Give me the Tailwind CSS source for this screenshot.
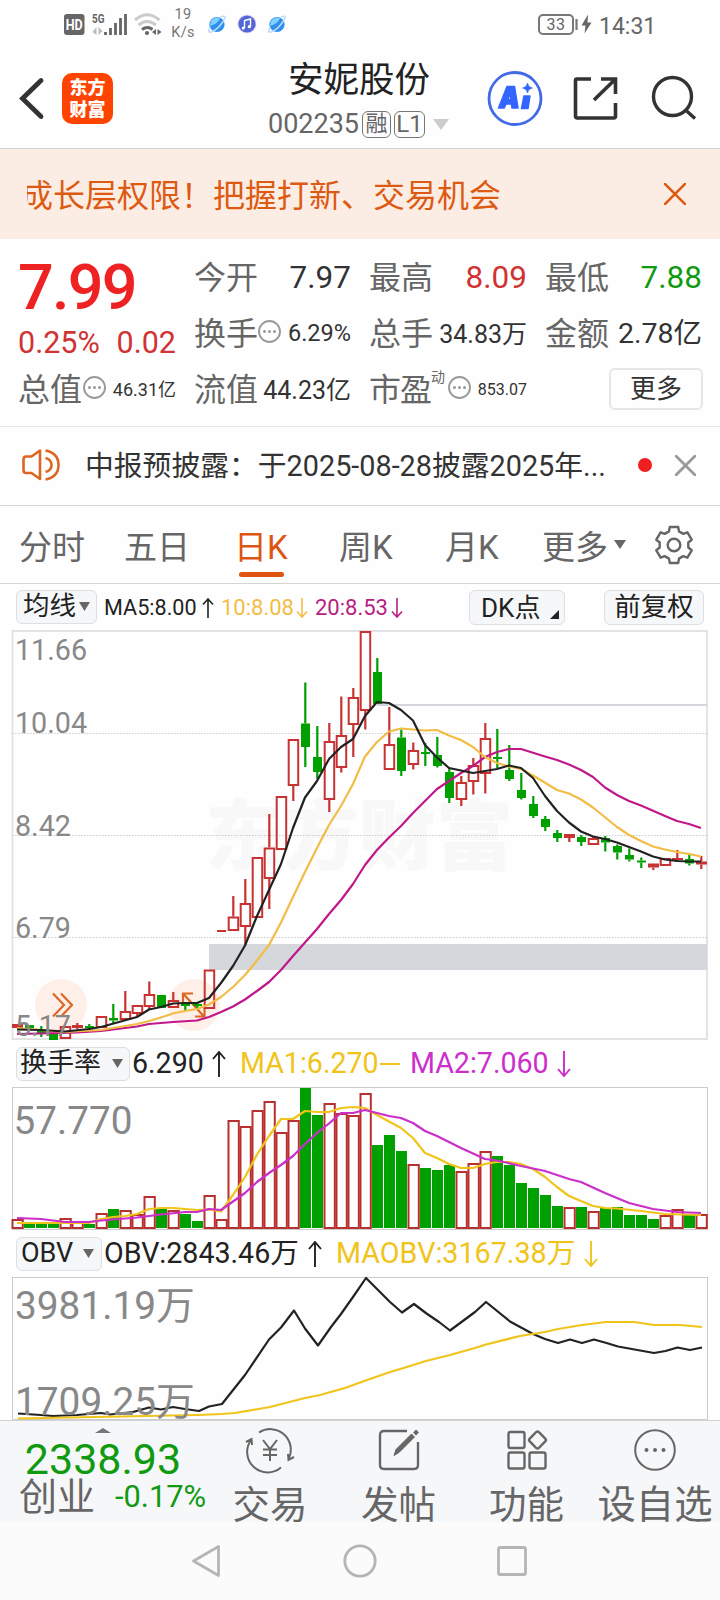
<!DOCTYPE html>
<html lang="zh-CN">
<head>
<meta charset="utf-8">
<title>安妮股份 002235</title>
<script src="https://cdn.jsdelivr.net/npm/@tailwindcss/browser@4"></script>
</head>
<body class="bg-white">
<div class="w-[720px] h-[1600px] overflow-hidden bg-[#fefefe] flex flex-col font-[Roboto,'Noto_Sans_CJK_SC',sans-serif] leading-none whitespace-nowrap text-[#333]">

  <!-- status bar -->
  <div class="h-12 shrink-0 flex items-center pl-16 text-[#666]">
    <svg class="w-[21px] h-[21px]" viewBox="0 0 21 21"><rect width="20.500" height="21" rx="3" fill="#666"/><text x="10.200" y="15.500" text-anchor="middle" font-size="14" font-weight="700" fill="#fff" textLength="17" lengthAdjust="spacingAndGlyphs">HD</text></svg>
    <svg class="w-[36px] h-[24px] ml-[7px]" viewBox="92 12 36 24"><text x="92" y="22.500" font-size="13" font-weight="700" fill="#666" textLength="12.500" lengthAdjust="spacingAndGlyphs">5G</text><path d="M96.500 27v8l-4-3zM98.500 35v-8l4 4z" fill="#bbb"/><path d="M105.500 32v3M110.500 28v7M115.500 23v12M120.500 18v17M125.500 14v21" stroke="#666" stroke-width="2.800"/></svg>
    <svg class="w-[28px] h-[24px] ml-[6px]" viewBox="134 12 28 24" fill="none" stroke-width="3"><path d="M135 20q12-10.500 24.500 0" stroke="#ccc"/><path d="M138.500 25q8.500-7 17.500 0" stroke="#ccc"/><path d="M142 29.500q5.500-4 10.500 0" stroke="#666"/><circle cx="147" cy="33" r="2.100" fill="#666"/><path d="M156 29v6l-4-3zM157.500 35v-6l4 3z" fill="#666"/></svg>
    <div class="w-[42px] flex flex-col items-center gap-[4px] text-[14.500px] text-[#777] tracking-[0.3px]"><span>19</span><span>K/s</span></div>
    <svg class="w-[18px] h-[19px] ml-[4px]" viewBox="0 0 18 19"><circle cx="9" cy="9.500" r="7.600" fill="#2f8fee"/><path d="M3 6q4-5 9-3-1 5-10 8z" fill="#7fd0ff"/><path d="M2 12Q-1 18 3 17 9 15 14 8T16 1.500Q15 1 13 2" fill="none" stroke="#bcdcfb" stroke-width="1.500"/></svg>
    <svg class="w-5 h-5 ml-[11px]" viewBox="0 0 20 20"><circle cx="10" cy="10" r="9.500" fill="#e9d4f8"/><circle cx="10" cy="10" r="8.600" fill="#5266d6"/><path d="M7.500 14V6.500l6-1.500v7.500" fill="none" stroke="#fff" stroke-width="1.400"/><circle cx="6.300" cy="14" r="1.600" fill="#fff"/><circle cx="12.300" cy="12.700" r="1.600" fill="#fff"/></svg>
    <svg class="w-[18px] h-[19px] ml-[11px]" viewBox="0 0 18 19"><circle cx="9" cy="9.500" r="7.600" fill="#2f8fee"/><path d="M3 6q4-5 9-3-1 5-10 8z" fill="#7fd0ff"/><path d="M2 12Q-1 18 3 17 9 15 14 8T16 1.500Q15 1 13 2" fill="none" stroke="#bcdcfb" stroke-width="1.500"/></svg>
    <div class="ml-[252px] mt-px w-[36px] h-[21px] border-2 border-[#777] rounded-[5px] flex items-center justify-center text-[16px] tracking-[0.5px]">33</div>
    <svg class="w-[20px] h-5 ml-[1px]" viewBox="0 0 20 20"><path d="M1.500 5v11" stroke="#777" stroke-width="2.200"/><path d="M13 0.500L6.500 11.500h4l-1 8 7-11h-4z" fill="#666"/></svg>
    <span class="text-[23px] ml-[4px] mt-[4px]">14:31</span>
  </div>

  <!-- title bar -->
  <div class="h-[101px] shrink-0 flex border-b border-[#cfd0d4]">
    <svg class="w-[30px] h-[44px] ml-[17px] mt-[28px]" viewBox="18 76 30 44"><path d="M42 80.500L23.500 98.500L42 116.500" fill="none" stroke="#333" stroke-width="4.800" stroke-linecap="round"/></svg>
    <div class="ml-[15px] mt-[25px] w-[51px] h-[51px] rounded-[10px] bg-[#ff4400] text-white font-black text-[18px] flex flex-col items-center justify-center gap-[4px]"><span>东方</span><span>财富</span></div>
    <div class="w-[238px] ml-[119px] pt-[12px] pl-[36px]">
      <div class="text-[35.5px] pt-[3px] ml-[20px] text-[#222]">安妮股份</div>
      <div class="flex items-center mt-[12px] text-[#666]">
        <span class="text-[27px] w-[94px]">002235</span>
        <span class="w-[29px] h-[27px] border border-[#777] rounded-[6px] text-[22px] flex items-center justify-center">融</span>
        <span class="w-[31px] h-[27px] ml-[3px] border border-[#777] rounded-[6px] text-[24px] flex items-center justify-center">L1</span>
        <svg class="w-4 h-[11px] ml-[8px] shrink-0" viewBox="0 0 16 11"><path d="M0 0h16L8 11z" fill="#ccc"/></svg>
      </div>
    </div>
    <svg class="w-[56px] h-[56px] ml-[17px] mt-[22px]" viewBox="0 0 56 56"><circle cx="28" cy="28.500" r="26" fill="none" stroke="#4169e8" stroke-width="2.800"/><g fill="#3366ff" stroke="#3366ff" stroke-width="1.500" stroke-linejoin="round"><path fill-rule="evenodd" d="M11.500 38L20 16.500h7.500L31 38h-6l-.6-4h-5.500L17.300 38zM20.800 29.500h3.200l-.6-5.500z"/><path d="M37 26h6l-2 12.500h-6.500z"/><path stroke-width="0.500" d="M40.500 13l1.600 3.400 3.400 1.600-3.400 1.600-1.600 3.400-1.600-3.400-3.400-1.600 3.400-1.600z"/></g></svg>
    <svg class="w-[46px] h-[46px] ml-[29px] mt-[27px]" viewBox="573 75 46 46" fill="none" stroke="#333" stroke-width="3.600"><path d="M592 79h-14a1.500 1.500 0 0 0-1.500 1.500v36a1.500 1.500 0 0 0 1.500 1.500h37a1.500 1.500 0 0 0 1.500-1.500V103M602 79h14.500v15M616 79.500L595 100"/></svg>
    <svg class="w-[48px] h-[48px] ml-[32px] mt-[26px]" viewBox="651 74 48 48" fill="none" stroke="#333" stroke-width="3.400"><circle cx="673.500" cy="96.500" r="19"/><path d="M686 109.500l10 9"/></svg>
  </div>

  <!-- notice banner -->
  <div class="h-[90px] shrink-0 bg-[#fcede4] flex items-center pl-[27px] text-[#dd5a12]">
    <div class="w-[637px] overflow-hidden"><div class="-ml-[6px] text-[32px] leading-[44px] pt-[3px]">成长层权限！把握打新、交易机会</div></div>
    <svg class="w-[22px] h-[22px]" viewBox="0 0 22 22"><path d="M0 0L22 22M22 0L0 22" stroke="#dd5a12" stroke-width="2.600"/></svg>
  </div>

  <!-- quote -->
  <div class="h-[188px] shrink-0 border-b border-[#e6e6e6] grid grid-cols-[158px_157px_158px_157px] gap-x-[18px] pl-[18px] pt-[11px] text-[#666] text-[32px]">
    <div>
      <div class="h-[75px] flex items-center text-[63px] font-medium text-[#ee2222] tracking-[-1.8px]">7.99</div>
      <div class="h-[37px] flex items-center justify-between text-[30.5px] text-[#d03333]"><span>0.25%</span><span>0.02</span></div>
      <div class="h-[56px] flex items-center"><span>总值</span><svg class="w-[23px] h-[23px] ml-px mb-[6px]" viewBox="0 0 23 23"><use href="#more"/></svg><span class="ml-auto text-[18px] text-[#333]">46.31亿</span></div>
    </div>
    <div>
      <div class="h-[56px] flex items-center justify-between"><span>今开</span><span class="text-[31.5px] text-[#333]">7.97</span></div>
      <div class="h-[56px] flex items-center"><span>换手</span><svg class="w-[23px] h-[23px] mb-[6px]" viewBox="0 0 23 23"><use href="#more"/></svg><span class="ml-auto text-[23.5px] text-[#333]">6.29%</span></div>
      <div class="h-[56px] flex items-center justify-between"><span>流值</span><span class="text-[25px] text-[#333]">44.23亿</span></div>
    </div>
    <div>
      <div class="h-[56px] flex items-center justify-between"><span>最高</span><span class="text-[31.5px] text-[#d03333]">8.09</span></div>
      <div class="h-[56px] flex items-center justify-between"><span>总手</span><span class="text-[25px] text-[#333]">34.83万</span></div>
      <div class="h-[56px] flex items-center"><span class="tracking-[-1px]">市盈</span><span class="text-[14px] mb-[27px]">动</span><svg class="w-[23px] h-[23px] ml-[3px] mb-[6px]" viewBox="0 0 23 23"><use href="#more"/></svg><span class="ml-auto text-[16px] text-[#333]">853.07</span></div>
    </div>
    <div>
      <div class="h-[56px] flex items-center justify-between"><span>最低</span><span class="text-[31.5px] text-[#109a10]">7.88</span></div>
      <div class="h-[56px] flex items-center justify-between"><span>金额</span><span class="text-[28.5px] text-[#333]">2.78亿</span></div>
      <div class="h-[56px] flex items-center justify-end"><span class="w-[94px] h-[42px] -mr-[1px] mb-[3px] border-2 border-[#e6e6e6] rounded-[6px] text-[26px] text-[#333] flex items-center justify-center">更多</span></div>
    </div>
  </div>

  <!-- announcement -->
  <div class="h-[79px] shrink-0 border-b border-[#d5d5d5] flex items-center">
    <svg class="w-[40px] h-[32px] ml-[22px] mb-[2px]" viewBox="22 449 40 32" fill="none" stroke="#dd6622" stroke-width="2.600" stroke-linejoin="round"><path d="M40 450.500v28.500l-8.500-6h-5.500q-2.500 0-2.500-3v-10.500q0-3 2.500-3h5.500z"/><path d="M45.500 458q6 1.500 6 7t-6 7M45.500 450.500q13 2.500 13 14.500t-13 14.500"/></svg>
    <span class="w-[554px] ml-[23px] text-[28.8px]">中报预披露：于2025-08-28披露2025年...</span>
    <span class="w-[14px] h-[14px] -ml-px mb-[2px] rounded-full bg-[#f02020]"></span>
    <svg class="w-[21px] h-[21px] ml-[23px] mb-[2px]" viewBox="0 0 21 21"><path d="M0 0L21 21M21 0L0 21" stroke="#999" stroke-width="2.800"/></svg>
  </div>

  <!-- period tabs -->
  <div class="h-[78px] shrink-0 border-b border-[#d5d5d5] grid grid-cols-[105px_110px_105px_106px_97px_71px_40px_42px] items-center pl-[19px] text-[33px] text-[#666]">
    <span class="pt-[5px]">分时</span><span class="pt-[5px]">五日</span>
    <span class="relative pt-[5px] text-[#dd5510]">日K<i class="absolute left-[5px] top-[46px] w-[45px] h-[5px] rounded-full bg-[#dd5510]"></i></span>
    <span class="pt-[5px]">周K</span><span class="pt-[5px]">月K</span><span class="pt-[5px]">更多</span>
    <svg class="w-[12px] h-[9px] ml-px" viewBox="0 0 12 9"><path d="M0 0h12L6 9z" fill="#666"/></svg>
    <svg class="w-[42px] h-[42px]" viewBox="-21 -21 42 42" fill="none" stroke="#666" stroke-width="2.400" stroke-linejoin="round"><path d="M-5-13.600L-4.200-18H4.200L5-13.600 9.300-11.100 13.400-12.700 17.700-5.300 14.300-2.500V2.500L17.700 5.300 13.400 12.700 9.300 11.100 5 13.600 4.200 18H-4.200L-5 13.600-9.300 11.100-13.400 12.700-17.700 5.300-14.300 2.500V-2.500L-17.700-5.300-13.400-12.700-9.300-11.100z"/><circle r="6.300"/></svg>
  </div>

  <!-- moving averages -->
  <div class="h-[45px] shrink-0 flex items-center text-[22px] text-[#222]">
    <span class="ml-4 w-[81px] h-[34px] border border-[#dcdee2] rounded-[6px] bg-[#f6f7f9] flex items-center pl-[6px] text-[26.500px]">均线<svg class="w-[11px] h-[9px] ml-[3px]" viewBox="0 0 11 9"><path d="M0 0h11L5.500 9z" fill="#666"/></svg></span>
    <span class="w-[98px] ml-[7px] mt-[2px] text-[21.600px]">MA5:8.00</span><svg class="w-[12px] h-[20px] mt-[3px]" viewBox="0 0 12 20"><path d="M6 20V1M1 6.500L6 1l5 5.500" fill="none" stroke="#222" stroke-width="1.600"/></svg>
    <span class="w-[75px] ml-[7px] mt-[2px] text-[#f2bd45]">10:8.08</span><svg class="w-[12px] h-[20px] mt-[3px]" viewBox="0 0 12 20"><path d="M6 0V19M1 13.500L6 19l5-5.500" fill="none" stroke="#f2bd45" stroke-width="1.600"/></svg>
    <span class="w-[76px] ml-[7px] mt-[2px] text-[#b8207f]">20:8.53</span><svg class="w-[12px] h-[20px] mt-[3px]" viewBox="0 0 12 20"><path d="M6 0V19M1 13.500L6 19l5-5.500" fill="none" stroke="#b8207f" stroke-width="1.600"/></svg>
    <span class="ml-[66px] w-[96px] h-[35px] mt-[2px] border border-[#dcdee2] rounded-[6px] bg-[#f6f7f9] flex items-center pl-[11px] text-[26px]">DK点<svg class="w-[9px] h-[9px] ml-[10px] mt-[14px]" viewBox="0 0 9 9"><path d="M9 0v9H0z" fill="#222"/></svg></span>
    <span class="ml-[39px] w-[100px] h-[35px] mt-[2px] border border-[#dcdee2] rounded-[6px] bg-[#f6f7f9] flex items-center justify-center text-[26.5px]">前复权</span>
  </div>

  <!-- price chart -->
  <svg class="w-[720px] h-[413px] shrink-0" viewBox="0 629 720 413" fill="none">
    <text x="205" y="864" font-size="77" font-weight="900" fill="#f8f8f8">东方财富</text>
    <rect x="12.500" y="631" width="694.500" height="408" stroke="#e3e3e5" stroke-width="2"/>
    <path d="M12 733.500H707M12 835.500H707M12 937.500H707" stroke="#ccc" stroke-dasharray="1.500 1.500"/>
    <path d="M377 705H707" stroke="#d4d6dc" stroke-width="2"/>
    <rect x="209" y="944" width="498" height="26" fill="#d4d8dd"/>
    <circle cx="61" cy="1005" r="26" fill="#fef0e9"/><circle cx="194" cy="1005" r="26" fill="#fef0e9"/>
    <path d="M53 993.500L64 1005L53 1016.500M61 993.500L72 1005L61 1016.500M183 1003v-9.500h10M183.500 994l20 22M195 1016.500h9.500v-9" stroke="#dd6622" stroke-width="2.200"/>
    <g id="candles"></g>
    <g stroke-width="2.200" stroke-linejoin="round">
      <polyline stroke="#c0188a" points="17,1034 41,1033.500 77,1032.500 101,1031 137,1026.500 149,1024 173,1022 197,1020.500 209,1017 221,1012 233,1006.500 245,999.500 257,991 269,982 281,970 293,956 305,942.500 317,929 329,914 341,900 353,884 365,865 377,850 389,837.500 401,826 413,813 425,801 437,789 449,781 461,773 473,766 485,757 497,752 509,749 521,749 545,756.500 557,760 569,764.500 581,770 593,777 605,787.500 617,795 629,801 641,805.500 665,816 677,821 689,824 701,828"/>
      <polyline stroke="#f2bd45" points="17,1028 41,1030 65,1032 101,1030 137,1024 149,1021 161,1017.500 173,1013.500 185,1011 197,1009 209,1004.500 221,997 233,987 245,975 257,960.500 269,945 281,922.500 293,897 305,872 317,848 329,825 341,806 353,784 365,756.500 377,742 389,731.500 401,728.500 413,729.500 425,730.500 437,730 449,735.500 461,740 473,747 485,757 497,763 509,766.500 521,769 533,775.500 557,790 569,793.500 581,799.500 593,807.500 617,827 629,835 641,841 653,846.500 665,849.500 677,852 689,854 701,856.500"/>
      <polyline stroke="#222" points="17,1029.500 41,1030 65,1031.500 89,1029 101,1027 137,1017 149,1009.500 161,1007 173,1003.500 185,1003 197,1003 209,998 221,983 233,966 245,945.500 257,916 269,890 281,864 293,828 305,797.500 317,781 329,759 341,747 353,739 365,716 377,702 389,703 401,710 413,720.500 425,745 437,757.500 449,768 473,773 485,771 497,769 509,765.500 521,768 533,778 545,796 557,811 569,822.500 581,831.500 593,836.500 605,839 617,842.500 629,847 641,851.500 653,856.500 665,859.500 677,861 689,861.500 701,861.500"/>
    </g>
    <g font-size="28.700" fill="#888"><text x="15" y="660">11.66</text><text x="15" y="733">10.04</text><text x="15" y="836">8.42</text><text x="15" y="938">6.79</text><text x="15" y="1036">5.17</text></g>
  </svg>

  <!-- turnover -->
  <div class="h-[43px] shrink-0 flex items-center text-[28.600px] text-[#222]">
    <span class="ml-4 w-[114px] h-[34px] border border-[#dcdee2] rounded-[6px] bg-[#f6f7f9] flex items-center pl-[3px] text-[27px]">换手率<svg class="w-[11px] h-[9px] ml-[11px]" viewBox="0 0 11 9"><path d="M0 0h11L5.500 9z" fill="#666"/></svg></span>
    <span class="w-[80px] ml-[2px]">6.290</span><svg class="w-[14px] h-[26px]" viewBox="0 0 14 26"><path d="M7 26V1M1 8L7 1l6 7" fill="none" stroke="#222" stroke-width="1.900"/></svg>
    <span class="w-[140px] ml-[14px] text-[#f0c419]">MA1:6.270</span><svg class="w-5 h-[26px]" viewBox="0 0 20 26"><path d="M0 13h20" stroke="#f0c419" stroke-width="2"/></svg>
    <span class="w-[147px] ml-[10px] text-[#cc2ecc]">MA2:7.060</span><svg class="w-[14px] h-[26px]" viewBox="0 0 14 26"><path d="M7 0V25M1 18L7 25l6-7" fill="none" stroke="#cc2ecc" stroke-width="1.900"/></svg>
  </div>
  <svg class="w-[720px] h-[147px] shrink-0" viewBox="0 1085 720 147" fill="none">
    <rect x="12.500" y="1087.500" width="695" height="142" stroke="#ccc"/>
    <g id="bars"></g>
    <g stroke-width="2.200" stroke-linejoin="round">
      <polyline stroke="#f0c419" points="17,1223 89,1223 101,1219 113,1217 125,1216 137,1214 149,1209 161,1208 173,1208 197,1210 209,1209.500 221,1211.500 233,1195 245,1177 257,1154.500 269,1136 281,1119 293,1119 305,1111 317,1112 329,1112 341,1108 353,1107 365,1108 377,1115 401,1128 413,1138 425,1153 437,1158 449,1164 461,1168 473,1168 485,1164 497,1162 509,1162 521,1164 533,1169 545,1177 557,1187 569,1196 593,1206 605,1208 617,1208.500 641,1211 665,1214 701,1215"/>
      <polyline stroke="#cc2ecc" points="17,1218 41,1219 65,1222 89,1222 101,1220.500 137,1217.500 161,1214.500 185,1212 197,1212 209,1209 221,1210 233,1201.500 245,1193 257,1182 269,1173 281,1165 293,1156 305,1144 317,1133 329,1123.500 341,1113 353,1113 365,1110 389,1116 401,1118 413,1123 425,1131 437,1136 461,1148 485,1159 497,1160.500 521,1166 545,1171 569,1179 581,1182 605,1193 629,1203 653,1209 677,1212 701,1213"/>
    </g>
    <text x="13.500" y="1134" font-size="38.700" fill="#888">57.770</text>
  </svg>

  <!-- OBV -->
  <div class="h-[43px] shrink-0 flex items-center text-[28.600px] text-[#222]">
    <span class="ml-4 w-[86px] h-[34px] border border-[#dcdee2] rounded-[6px] bg-[#f6f7f9] flex items-center pl-[4px] text-[27px]">OBV<svg class="w-[11px] h-[9px] ml-[10px]" viewBox="0 0 11 9"><path d="M0 0h11L5.500 9z" fill="#666"/></svg></span>
    <span class="w-[204px] ml-[2px]">OBV:2843.46万</span><svg class="w-[14px] h-[26px]" viewBox="0 0 14 26"><path d="M7 26V1M1 8L7 1l6 7" fill="none" stroke="#222" stroke-width="1.900"/></svg>
    <span class="w-[248px] ml-[14px] text-[28.700px] text-[#f0c419]">MAOBV:3167.38万</span><svg class="w-[14px] h-[26px]" viewBox="0 0 14 26"><path d="M7 0V25M1 18L7 25l6-7" fill="none" stroke="#f0c419" stroke-width="1.900"/></svg>
  </div>
  <svg class="w-[720px] h-[145px] shrink-0" viewBox="0 1275 720 145" fill="none">
    <rect x="12.500" y="1277.500" width="695" height="142" stroke="#ccc"/>
    <g stroke-width="2.200" stroke-linejoin="round">
      <polyline stroke="#222" points="18,1413.500 41,1415 53,1416 77,1415 89,1414 101,1413 110,1414.500 133,1412 149,1407.500 161,1409.500 173,1407 185,1409 199,1411 209,1406.500 222,1404 245,1375 269,1339.500 281,1327.500 294,1310.500 305,1328.500 318,1345.500 331,1327 341,1314 353,1297 366,1278 390,1302 402,1312.500 414,1304 426.500,1313.500 439,1322 450,1330.500 475,1312 486,1302 510,1321.500 533,1334 545,1339 558,1343 570,1339.500 582,1343 594,1339.500 606.500,1343 618,1346.500 654,1353 665.500,1351 677.500,1347.500 690,1350 702,1347.500"/>
      <polyline stroke="#f0c419" points="18,1418.500 95,1417 197,1415 222,1414 235,1413 270,1407 305,1398 320,1395 345,1388 360,1382.500 390,1372 402,1368.500 426,1361 450,1355 475,1348 486,1344.500 520,1336 545,1332 558,1329 582,1325 606,1322 634,1322 654,1325 680,1325 702,1327"/>
    </g>
    <text x="15" y="1319" font-size="38.800" fill="#888">3981.19万</text><text x="15" y="1415" font-size="38.800" fill="#888">1709.25万</text>
  </svg>

  <!-- bottom bar -->
  <div class="h-[102px] shrink-0 overflow-hidden bg-[#f6f7f9] border-t border-[#d0d2d6] grid grid-cols-[206px_128px_129px_127px_130px] text-[#666]">
    <div class="flex flex-col items-center">
      <svg class="w-4 h-[5px] mt-[7px]" viewBox="0 0 16 5"><path d="M0 5L8 0l8 5z" fill="#777"/></svg>
      <div class="text-[43px] mt-[5px] text-[#109a10]">2338.93</div>
      <div class="w-full flex items-center pl-[19px] -mt-[3px] text-[38px]"><span>创业</span><span class="ml-[20px] text-[30.800px] text-[#109a10]">-0.17%</span></div>
    </div>
    <div class="flex flex-col items-center text-[37.500px]"><svg class="w-[50px] h-[50px] mt-[4px] mb-[12px] shrink-0" viewBox="0 0 50 50" fill="none" stroke="#666" stroke-width="2"><path d="M14 7.500A20.500 20.500 0 0 1 44 33M36 42.500A20.500 20.500 0 0 1 6 15M1 17l5.500-3 .5 6M49 32l-5.500 3-.5-6M18 15l7 9 7-9M25 24v12M18 24.500h14M18 30h14"/></svg>交易</div>
    <div class="flex flex-col items-center text-[37.500px]"><svg class="w-[50px] h-[50px] mt-[4px] mb-[12px] shrink-0" viewBox="0 0 50 50" fill="none" stroke="#666" stroke-width="2.400"><path d="M33 6H10q-4 0-4 4v30q0 4 4 4h30q4 0 4-4V17"/><path d="M20 30.500l2-6L37.500 9l3 3L25 27.500z" fill="#666" stroke-width="1"/><path d="M40.500 9L43.500 6" stroke-width="4"/></svg>发帖</div>
    <div class="flex flex-col items-center text-[37.500px]"><svg class="w-[50px] h-[50px] mt-[4px] mb-[12px] shrink-0" viewBox="0 0 50 50" fill="none" stroke="#666" stroke-width="2.400"><rect x="6.500" y="7" width="16" height="16" rx="2"/><rect x="6.500" y="27.500" width="16" height="16" rx="2"/><rect x="27.500" y="27.500" width="16" height="16" rx="2"/><rect x="29" y="8.500" width="13" height="13" rx="2" transform="rotate(45 35.500 15)"/></svg>功能</div>
    <div class="flex flex-col items-center text-[38.300px]"><svg class="w-[50px] h-[50px] mt-[4px] mb-[11px] shrink-0" viewBox="0 0 50 50"><circle cx="25" cy="25" r="19.800" fill="none" stroke="#666" stroke-width="2"/><circle cx="16.500" cy="25" r="2" fill="#666"/><circle cx="25" cy="25" r="2" fill="#666"/><circle cx="33.500" cy="25" r="2" fill="#666"/></svg>设自选</div>
  </div>

  <!-- system navigation -->
  <div class="h-[78px] shrink-0 bg-[#fbfbfb] flex items-center pl-[191px]">
    <svg class="w-[30px] h-[34px]" viewBox="0 0 30 34"><path d="M27.500 2.500v29L2.500 17z" fill="none" stroke="#b5b5b5" stroke-width="2.800" stroke-linejoin="round"/></svg>
    <svg class="w-[34px] h-[34px] ml-[122px]" viewBox="0 0 34 34"><circle cx="17" cy="17" r="15.200" fill="none" stroke="#b5b5b5" stroke-width="2.800"/></svg>
    <svg class="w-[30px] h-[30px] ml-[120px]" viewBox="0 0 30 30"><rect x="1.500" y="1.500" width="27" height="27" rx="1.500" fill="none" stroke="#b5b5b5" stroke-width="2.800"/></svg>
  </div>
</div>

<svg width="0" height="0" class="absolute"><defs><g id="more"><circle cx="11.500" cy="11.500" r="10.500" fill="none" stroke="#999" stroke-width="1.900"/><circle cx="6.500" cy="11.500" r="1.500" fill="#999"/><circle cx="11.500" cy="11.500" r="1.500" fill="#999"/><circle cx="16.500" cy="11.500" r="1.500" fill="#999"/></g></defs></svg>

<script>
// Each candle: type (r hollow red, R solid red, g green), wick top, body top, body bottom, wick bottom
const candles = [
['R',1024,1024,1028,1028],['g',1025,1025,1028,1028],['g',1026,1031,1033,1037],['g',1034,1034,1040,1040],['r',1026,1026,1039,1039],
['R',1023,1025,1028,1029],['g',1024,1026,1028,1030],['r',1016,1016,1028,1028],['g',1004,1018,1020.5,1023],['r',991,1011,1020,1020],
['r',1005,1005,1014,1017],['r',981.5,994,1007,1010],['g',995,995,1008,1008],['r',992,1000,1008,1008],['g',1002,1004,1006,1011],
['g',1003,1004,1006,1008],['r',969.5,969.5,1009,1009],['R',930,930,932,932],['r',896,916.5,931,931],['r',879,903,927,945],
['r',857,857,918,918],['r',814,847.5,879,909],['r',796,796,850,850],['r',739,739,786,801],['g',682.5,723.5,747,767],
['g',726,757,772,779],['r',723,741,800,812],['r',696.5,735,768,772.5],['r',688,697,725,757],['r',631,631,711,729.5],
['g',658,672,704,704],['r',707,744,770,770],['g',729.5,737.5,771,776],['r',742.5,750,765,769.5],['g',743,752,754,766],
['g',737,755,766,767.5],['g',768,772,798,803],['r',776,782,800,806],['r',758,765,782,794.5],['r',723,738,774,793.5],
['g',729,757,759,768],['g',745,770,779,781],['g',773,790,798,799.5],['g',796,804,816,818],['g',816,819,827,831],
['g',830,833,838,842],['R',834,834,838,842],['g',835,837,842,846],['r',836.5,838,845,845],['g',836,838,842.5,851.5],
['g',844.5,846,852.5,859.5],['g',848.5,855,859.5,861.5],['g',857.5,860.5,862.5,868],['R',863.5,863.5,867.5,870],['r',858,858,866,866],
['R',850,858,860,862],['g',855,859,863.5,865.5],['R',856,861.5,864.5,869]];
// Turnover bars: colour and top edge
const bars = 'r1219 g1224 g1224 g1224 r1218 r1221 g1224 r1213 g1209 r1210 r1214 r1196 g1209 r1210 g1214 g1221 r1195 r1219 r1120 r1126 r1110 r1101 r1132 r1120 g1088 g1115 r1103 r1113 r1115 r1093 g1145 g1135 g1151 r1164 g1168 g1170 g1165 r1171 r1163 r1151 g1156 g1165 g1183 g1188 g1195 g1206 r1207 g1207 r1211 g1208 g1207 g1215 g1215 g1219 r1215 r1209 g1215 r1214'.split(' ');
const RED = '#c83232', GREEN = '#00a000';
const rect = (x, y, w, h, c) => `<rect x="${x}" y="${y}" width="${w}" height="${h}" fill="${c}"/>`;
const box = (x, y, w, h, c) => `<rect x="${x + 1}" y="${y + 1}" width="${w - 2}" height="${Math.max(h - 2, 1)}" stroke="${c}" stroke-width="2"/>`;
document.getElementById('candles').innerHTML = candles.map(([t, hi, a, b, lo], i) => {
  const x = 17 + 12 * i, c = t === 'g' ? GREEN : RED;
  let s = '';
  if (hi < a) s += rect(x - 0.8, hi, 2.2, a - hi, c);
  if (lo > b) s += rect(x - 0.8, b, 2.2, lo - b, c);
  const w = t === 'R' && i !== 17 ? 11 : 9;
  return s + (t === 'r' ? box(x - 5.3, a, 11.5, b - a, c) : rect(x - w / 2 + 0.5, a, w, b - a, c));
}).join('');
document.getElementById('bars').innerHTML = bars.map((s, i) => {
  const x = 17 + 12 * i, y = +s.slice(1);
  return s[0] === 'g' ? rect(x - 5, y, 11, 1228 - y, GREEN) : box(x - 5.5, y, 12.3, 1229 - y, '#b83030');
}).join('');
</script>
</body>
</html>
